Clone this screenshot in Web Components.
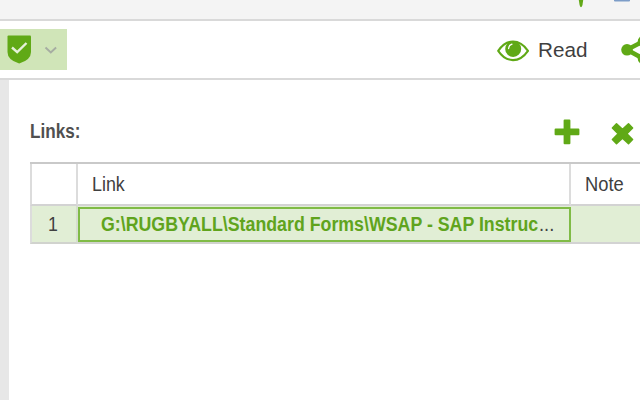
<!DOCTYPE html>
<html lang="en"><head><meta charset="utf-8"><title>Links</title>
<style>
html,body{margin:0;width:640px;height:400px;overflow:hidden;background:#fff;font-family:"Liberation Sans",Arial,sans-serif;color:#404040}
</style></head><body>
<app-shell></app-shell>
<script>
const make=(name,html)=>customElements.define(name,class extends HTMLElement{
  constructor(){super();this.attachShadow({mode:'open'}).innerHTML=html;}
});

// Text whose glyphs are condensed horizontally to a fixed width.
customElements.define('fit-text',class extends HTMLElement{
  connectedCallback(){
    const r=this.attachShadow({mode:'open'});
    r.innerHTML='<style>:host{display:block;white-space:pre}span{display:inline-block;transform-origin:0 50%}</style><span><slot></slot></span>';
    const s=r.querySelector('span');
    const w=+this.getAttribute('width');
    this.style.width=w+'px';
    s.style.transform='scaleX('+w/s.offsetWidth+')';
  }
});

make('top-strip',`<style>:host{display:block;height:19px;background:#f4f4f4;border-bottom:2px solid #d9d9d9}svg{display:block}</style>
<svg width="640" height="19"><path d="M578.800 0h4.400L582.500 5Q582 7 581 7.200Q580 7 579.600 5Z" fill="#62a818"/><path d="M614 0h16v.8q0 .7-1 .7h-14q-1 0-1-.7z" fill="#7d9dc8"/></svg>`);

make('tool-bar',`<style>
:host{display:flex;height:57px;border-bottom:2px solid #d9d9d9;background:#fff;overflow:hidden}
.status{width:67px;height:41px;margin-top:8px;background:#d0e5b8;flex:none}
.right{display:flex;margin-left:430px;flex:none}
svg{display:block;flex:none}
.eye{margin-top:18px}
fit-text{font-size:20.500px;line-height:24px;margin:17px 0 0 8px;color:#3f3f3f}
.share{margin:15px 0 0 33px}
</style>
<div class="status"><svg width="67" height="41"><path d="M7.500 7.500Q7.500 6.500 8.500 6.500H30Q31 6.500 31 7.500V23Q31 31 19.200 34.500Q7.500 31 7.500 23Z" fill="#60a916"/><path d="M12 18.500l5.200 4.700 9.300-9.200" fill="none" stroke="#e5f1d9" stroke-width="2.400"/><path d="M45.500 18.500l5.300 5 5.300-5" fill="none" stroke="#a6ada2" stroke-width="1.900"/></svg></div>
<div class="right">
<svg class="eye" width="33" height="24" viewBox="0 0 33 24"><path d="M1.200 11.800Q7.500 2.500 16 2.500T31 11.800Q24.500 21.100 16 21.100T1.200 11.800Z" fill="#fff" stroke="#60a916" stroke-width="2.100" stroke-linejoin="round"/><circle cx="16.200" cy="9.900" r="8" fill="#60a916"/><path d="M11.600 9.500Q11.800 6.200 15 5.200" fill="none" stroke="#fff" stroke-width="1.300" stroke-linecap="round"/></svg>
<fit-text width="49.500">Read</fit-text>
<svg class="share" width="30" height="30" viewBox="0 0 30 30"><path d="M21 6L6 13.800 21 22" fill="none" stroke="#60a916" stroke-width="4.500"/><circle cx="6" cy="13.800" r="5.800" fill="#60a916"/><circle cx="22.500" cy="5.500" r="5.800" fill="#60a916"/><circle cx="22.500" cy="22.500" r="5.800" fill="#60a916"/></svg>
</div>`);

make('panel-head',`<style>
:host{display:flex;height:82px;width:610px}
fit-text{font-size:19.500px;line-height:24px;font-weight:700;margin-top:39px;color:#505050}
svg{display:block;flex:none}
.plus{margin:38.500px 0 0 474px}.cross{margin:42px 0 0 30.500px}
</style><fit-text width="50">Links:</fit-text>
<svg class="plus" width="26" height="27"><path d="M9.600 1.500q0-1 1-1h4.800q1 0 1 1v8h8q1 0 1 1v4.800q0 1-1 1h-8v8q0 1-1 1h-4.800q-1 0-1-1v-8h-8q-1 0-1-1v-4.800q0-1 1-1h8z" fill="#60a916"/></svg>
<svg class="cross" width="24" height="24"><path d="M5.500 1.800L11.500 7.300 17.500 1.800 21.600 6 15.900 11.700 21.600 17.500 17.500 21.600 11.500 16.100 5.500 21.600 1.400 17.500 7.100 11.700 1.400 6Z" fill="#60a916" stroke="#60a916" stroke-width="1.500" stroke-linejoin="round"/></svg>`);

make('link-table',`<style>
:host{display:block;width:660px;font-size:19.500px}
.grid{display:grid;grid-template-columns:48px 493px 119px;grid-template-rows:42px 38px;border-top:2px solid #c9c9c9;box-sizing:border-box;width:660px}
.grid>div{box-sizing:border-box;border-right:2px solid #dcdcdc;border-bottom:2px solid #d3d3d3;line-height:41px}
.grid>div.edge{border-left:2px solid #dcdcdc}
.h{padding-left:14px}.grid>.row{background:#e1eed5;line-height:37px}
.grid>.num{padding-left:15.500px;border-right-color:#d6ddcf;border-bottom-color:#d1d3ce}
.grid>.link{padding:1px 0;border-right:0;border-bottom-color:#d1d3ce}
.box{box-sizing:border-box;height:35px;border:2px solid #80bb46;display:flex;padding-left:21px;line-height:31px}
.box fit-text:first-child{font-weight:700;color:#60a41d}
</style><div class="grid"><div class="edge"></div><div class="h"><fit-text width="33">Link</fit-text></div><div class="h"><fit-text width="38.500">Note</fit-text></div>
<div class="row edge num"><fit-text width="10">1</fit-text></div><div class="row link"><div class="box"><fit-text width="437.500">G:\\RUGBYALL\\Standard Forms\\WSAP - SAP Instruc</fit-text><fit-text width="15">...</fit-text></div></div><div class="row"></div></div>`);

make('app-shell',`<style>:host{display:block;width:640px;height:400px;overflow:hidden}
main{display:flex;height:320px}.rail{width:9px;flex:none;background:#e7e7e7;margin-right:21px}
section{flex:none}</style>
<top-strip></top-strip><tool-bar></tool-bar><main><div class="rail"></div><section><panel-head></panel-head><link-table></link-table></section></main>`);
</script></body></html>
